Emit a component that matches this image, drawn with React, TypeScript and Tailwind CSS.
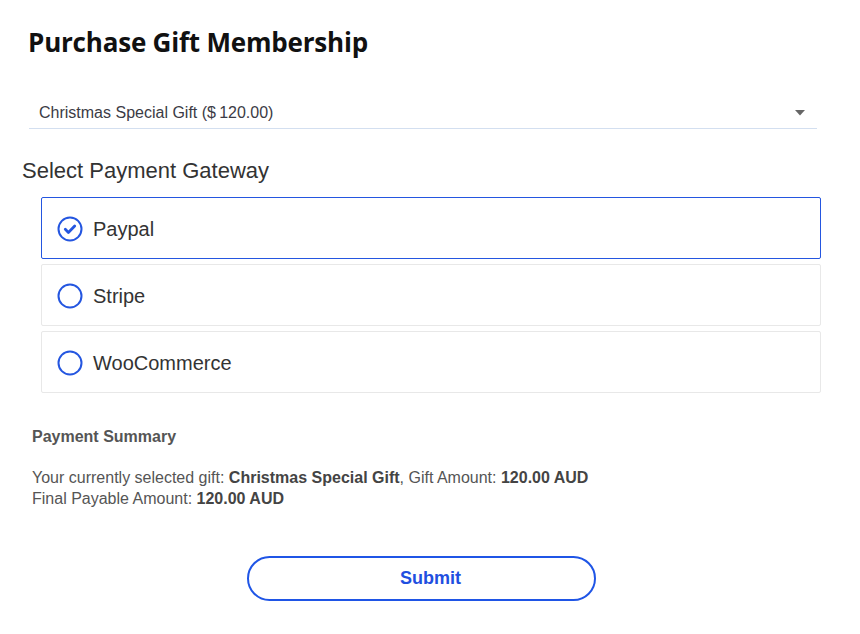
import React, { useState } from 'react';

const gateways = ['Paypal', 'Stripe', 'WooCommerce'];

const RadioIcon = ({ checked }: { checked: boolean }) => (
  <svg width="26" height="26" viewBox="0 0 26 26" className="shrink-0">
    <circle cx="13" cy="13" r="11.5" fill="none" stroke="#2456e0" strokeWidth="2" />
    {checked && (
      <path d="M8.3 13.3l3.1 3.1 6.3-6.4" fill="none" stroke="#2456e0" strokeWidth="2.8" strokeLinecap="round" strokeLinejoin="round" />
    )}
  </svg>
);

const App = () => {
  const [selected, setSelected] = useState('Paypal');

  return (
    <div className="w-[860px] h-[634px] bg-white font-['Liberation_Sans',Arial,sans-serif]">
      <div className="pl-[22px] pr-[39px] pt-[24px]">
        <h1 className="pl-[6px] text-[26px] leading-[36px] font-bold text-[#111] font-['Open_Sans','Noto_Sans',sans-serif] tracking-[-0.2px]">
          Purchase Gift Membership
        </h1>

        {/* Gift select */}
        <div className="ml-[7px] mr-[4px] mt-[36px] h-[33px] flex items-center justify-between pl-[10px] pr-[12px] border-b border-[#d3dff0]">
          <span className="mt-[1px] text-[16px] text-[#3b3b45]">Christmas Special Gift ($&#8201;120.00)</span>
          <svg width="10" height="6" viewBox="0 0 10 6" className="mt-[1px]">
            <path d="M0 0h10L5 5.5z" fill="#666" />
          </svg>
        </div>

        <h2 className="mt-[30px] text-[22px] leading-[24px] text-[#333]">Select Payment Gateway</h2>

        <div className="ml-[19px] mt-[14px] flex flex-col gap-[5px]">
          {gateways.map((g) => {
            const active = g === selected;
            return (
              <button
                key={g}
                onClick={() => setSelected(g)}
                className={`h-[62px] flex items-center gap-[10px] pl-[15px] pt-[2px] rounded-[2px] border text-left ${
                  active ? 'border-[#2456e0]' : 'border-[#e8e8e8]'
                }`}
              >
                <RadioIcon checked={active} />
                <span className="text-[20px] text-[#333]">{g}</span>
              </button>
            );
          })}
        </div>

        {/* Summary */}
        <div className="pl-[10px] mt-[34px] text-[#555]">
          <div className="text-[16px] leading-[20px] font-bold">Payment Summary</div>
          <div className="mt-[20px] text-[16px] leading-[21px]">
            <div>
              Your currently selected gift: <b className="text-[#444]">Christmas Special Gift</b>, Gift Amount:{' '}
              <b className="text-[#444]">120.00 AUD</b>
            </div>
            <div>
              Final Payable Amount: <b className="text-[#444]">120.00 AUD</b>
            </div>
          </div>
        </div>

        <div className="mt-[47px] flex justify-center">
          <button className="w-[349px] h-[45px] pl-[18px] rounded-full border-2 border-[#1f55e6] text-[#1f4fe0] text-[18px] font-bold">
            Submit
          </button>
        </div>
      </div>
    </div>
  );
};

export default App;
